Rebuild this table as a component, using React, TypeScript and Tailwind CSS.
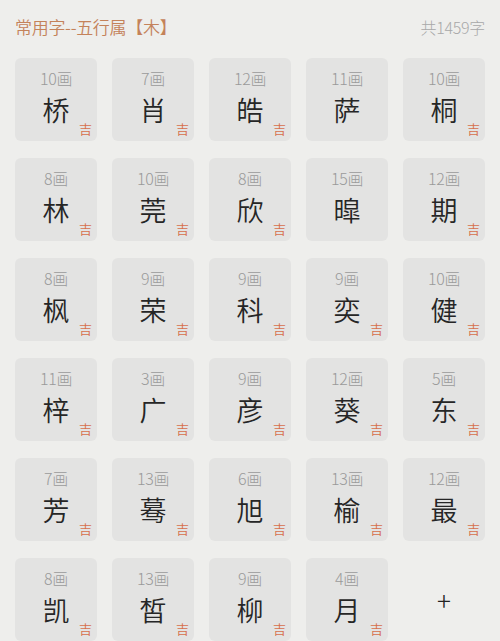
import React from "react";

type Item = { s: number; c: string; j: boolean };

const items: Item[] = [
  { s: 10, c: "桥", j: true },
  { s: 7, c: "肖", j: true },
  { s: 12, c: "皓", j: true },
  { s: 11, c: "萨", j: false },
  { s: 10, c: "桐", j: true },
  { s: 8, c: "林", j: true },
  { s: 10, c: "莞", j: true },
  { s: 8, c: "欣", j: true },
  { s: 15, c: "暭", j: false },
  { s: 12, c: "期", j: true },
  { s: 8, c: "枫", j: true },
  { s: 9, c: "荣", j: true },
  { s: 9, c: "科", j: true },
  { s: 9, c: "奕", j: true },
  { s: 10, c: "健", j: true },
  { s: 11, c: "梓", j: true },
  { s: 3, c: "广", j: true },
  { s: 9, c: "彦", j: true },
  { s: 12, c: "葵", j: true },
  { s: 5, c: "东", j: true },
  { s: 7, c: "芳", j: true },
  { s: 13, c: "蓦", j: true },
  { s: 6, c: "旭", j: true },
  { s: 13, c: "榆", j: true },
  { s: 12, c: "最", j: true },
  { s: 8, c: "凯", j: true },
  { s: 13, c: "皙", j: true },
  { s: 9, c: "柳", j: true },
  { s: 4, c: "月", j: true },
];

export default function App() {
  return (
    <div
      className="w-[500px] h-[641px] overflow-hidden bg-[#eeeeec] px-[15px]"
      style={{ fontFamily: '"Noto Sans CJK SC", "Noto Sans", sans-serif' }}
    >
      <div className="flex items-center justify-between h-[58px] pb-[4px]">
        <div className="text-[17px] font-[350] text-[#c4825a] tracking-[-0.3px]">常用字--五行属【木】</div>
        <div className="text-[16px] font-light text-[#a8a8a8] tracking-[-0.3px]">共1459字</div>
      </div>
      <div className="grid grid-cols-5 gap-x-[15px] gap-y-[17px]">
        {items.map((it, i) => (
          <div
            key={i}
            className="relative h-[83px] rounded-[6px] bg-[#e3e3e2] flex flex-col items-center"
          >
            <div className="mt-[10px] text-[16px] font-light leading-[20px] text-[#9a9a9a] tracking-[-0.3px]">
              {it.s}画
            </div>
            <div className="mt-[6px] text-[27px] font-[350] leading-[32px] text-[#262626]">{it.c}</div>
            {it.j && (
              <div className="absolute right-[5px] bottom-[5px] text-[13px] font-[350] leading-[15px] text-[#d66f4b]">
                吉
              </div>
            )}
          </div>
        ))}
        <div className="h-[83px] flex items-center justify-center">
          <span className="text-[26px] leading-[26px] text-[#222] font-light">+</span>
        </div>
      </div>
    </div>
  );
}
